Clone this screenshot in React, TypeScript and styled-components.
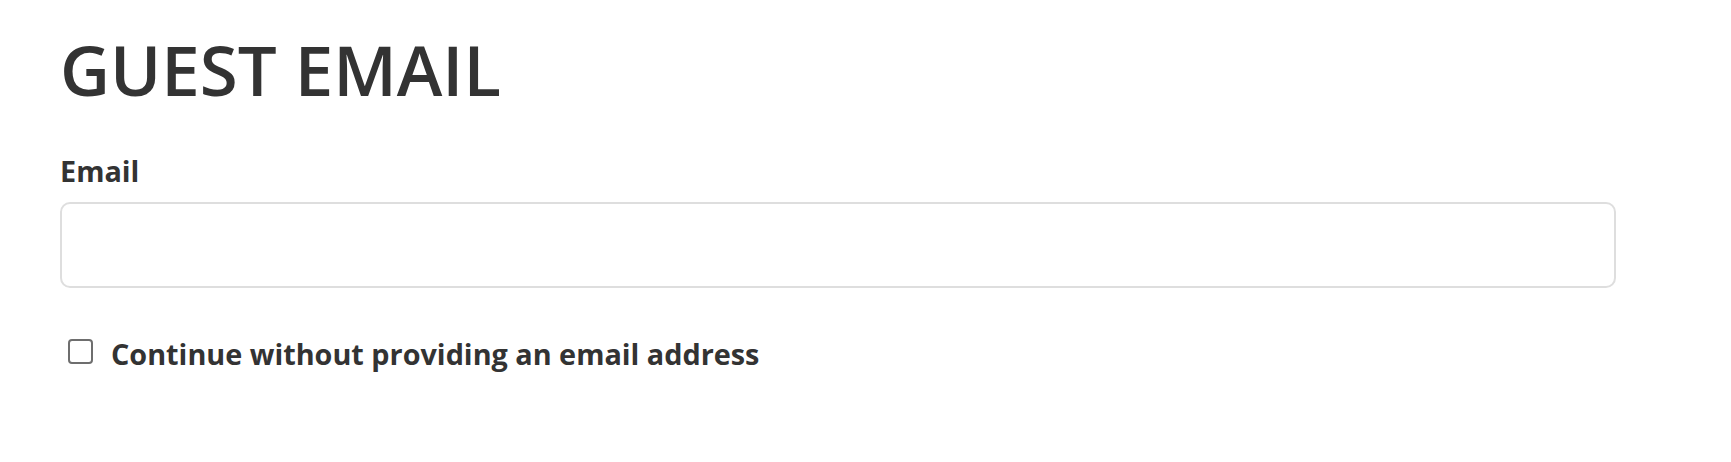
import React from "react";
import styled, { createGlobalStyle } from "styled-components";

const Global = createGlobalStyle`
  html, body { margin: 0; padding: 0; background: #fff; }
  body { font-family: "Open Sans", "Noto Sans", sans-serif; color: #333; }
  * { box-sizing: border-box; }
`;

const Page = styled.main`
  padding: 22px 0 0 60px;
  width: 1616px;
`;

const Title = styled.h1`
  margin: 0;
  font-size: 69px;
  font-weight: 600;
  line-height: normal;
  color: #333;
`;

const Field = styled.div`
  display: flex;
  flex-direction: column;
  margin-top: 35px;
`;

const Label = styled.label`
  font-size: 28.8px;
  font-weight: 700;
  line-height: normal;
  color: #333;
`;

const Input = styled.input`
  margin-top: 12px;
  height: 86px;
  width: 100%;
  border: 2px solid #dedede;
  border-radius: 10px;
  padding: 0 20px;
  font-family: inherit;
  font-size: 26px;
  color: #333;
  outline: none;
  background: #fff;
`;

const CheckRow = styled.label`
  display: flex;
  align-items: center;
  gap: 18px;
  margin-top: 46px;
  padding-left: 8px;
  cursor: pointer;
`;

const Box = styled.input`
  appearance: none;
  margin: 0;
  width: 25px;
  height: 25px;
  border: 2px solid #6e6e6e;
  border-radius: 4px;
  background: #fff;
  flex: none;
  position: relative;
  top: -2px;
`;

const CheckText = styled.span`
  font-size: 28.8px;
  font-weight: 700;
  line-height: normal;
  color: #333;
`;

export default function App() {
  return (
    <>
      <Global />
      <Page>
        <Title>GUEST EMAIL</Title>
        <Field>
          <Label htmlFor="guest-email">Email</Label>
          <Input id="guest-email" type="email" />
        </Field>
        <CheckRow>
          <Box type="checkbox" />
          <CheckText>Continue without providing an email address</CheckText>
        </CheckRow>
      </Page>
    </>
  );
}
